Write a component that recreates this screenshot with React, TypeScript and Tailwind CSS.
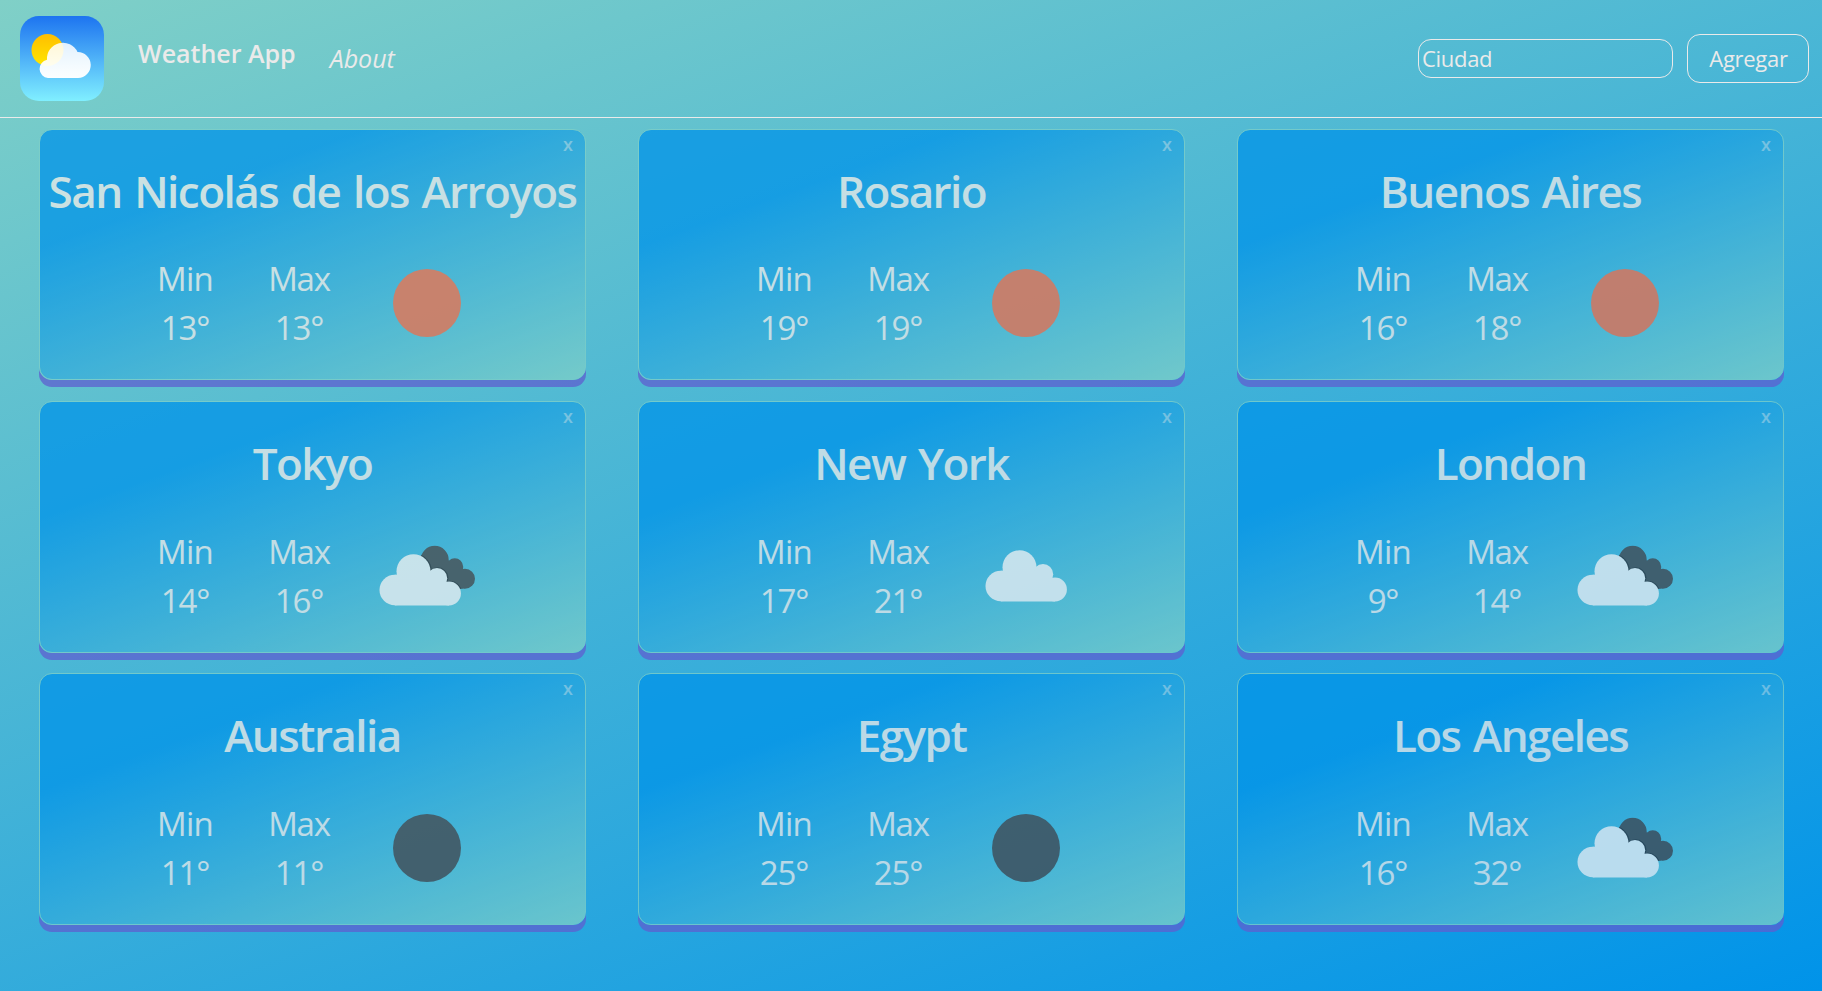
import React from "react";

type Sky = "sun" | "moon" | "cloud" | "broken";

interface City {
  name: string;
  min: number;
  max: number;
  sky: Sky;
}

const cities: City[] = [
  { name: "San Nicolás de los Arroyos", min: 13, max: 13, sky: "sun" },
  { name: "Rosario", min: 19, max: 19, sky: "sun" },
  { name: "Buenos Aires", min: 16, max: 18, sky: "sun" },
  { name: "Tokyo", min: 14, max: 16, sky: "broken" },
  { name: "New York", min: 17, max: 21, sky: "cloud" },
  { name: "London", min: 9, max: 14, sky: "broken" },
  { name: "Australia", min: 11, max: 11, sky: "moon" },
  { name: "Egypt", min: 25, max: 25, sky: "moon" },
  { name: "Los Angeles", min: 16, max: 32, sky: "broken" },
];

function CloudShape() {
  return (
    <>
      <circle cx="15.3" cy="35.7" r="15.3" />
      <circle cx="34" cy="17" r="17" />
      <circle cx="57.5" cy="24" r="10.2" />
      <circle cx="69.5" cy="39.2" r="11.9" />
      <path d="M15.3 20.4H34L57.5 20L69.5 30V51.1H15.3Z" />
    </>
  );
}

function SkyIcon({ sky }: { sky: Sky }) {
  return (
    <svg viewBox="0 0 100 100" className="h-[100px] w-[100px]" aria-hidden="true">
      {sky === "sun" && <circle cx="50" cy="50" r="34" fill="#ec6e4c" />}
      {sky === "moon" && <circle cx="50" cy="50" r="34" fill="#48484a" />}
      {sky === "cloud" && (
        <g transform="translate(9.5 24.3)" fill="#f2f2f2">
          <CloudShape />
        </g>
      )}
      {sky === "broken" && (
        <g transform="translate(0 0.3)">
          <clipPath id="rear-cloud">
            <circle cx="57.7" cy="33.5" r="14" />
            <circle cx="77.7" cy="40.5" r="8.5" />
            <circle cx="88" cy="52.5" r="10" />
            <path d="M50 40L72 34L86 46V62.5H60Z" />
          </clipPath>
          <g clipPath="url(#rear-cloud)">
            <rect width="100" height="100" fill="#48484a" />
            <g transform="translate(3.3 27.6)" fill="#2c2c30" stroke="#2c2c30" strokeWidth="0.8">
              <CloudShape />
            </g>
          </g>
          <g transform="translate(2.5 28)" fill="#f2f2f2">
            <CloudShape />
          </g>
        </g>
      )}
    </svg>
  );
}

function CityCard({ city }: { city: City }) {
  return (
    <article className="flex h-[251.4px] w-[547px] flex-col rounded-[13px] border border-[#80d0c7] bg-[linear-gradient(160deg,#0093e9_26%,#80d0c7_100%)] opacity-75 shadow-[0_7px_0_#5f5fd0]">
      <div className="flex h-[31.5px] items-start justify-end pr-[12px]">
        <button className="text-[18px] leading-[28px] font-semibold text-[#eaeaea] opacity-50">x</button>
      </div>
      <h2 className="text-center text-[44px] leading-[58px] font-semibold tracking-[-1.55px] whitespace-nowrap text-[#eaeaea] [word-spacing:2.8px]">
        {city.name}
      </h2>
      <div className="mt-[33.9px] flex pl-[90px] text-center text-[33px] leading-[49px] tracking-[-1.2px] text-[#eaeaea]">
        <div className="w-[110px] pt-px">
          <p className="tracking-[-0.8px]">Min</p>
          <p>{city.min}°</p>
        </div>
        <div className="w-[118px] pt-px">
          <p>Max</p>
          <p>{city.max}°</p>
        </div>
        <div className="ml-[19px]">
          <SkyIcon sky={city.sky} />
        </div>
      </div>
    </article>
  );
}

function Logo() {
  return (
    <svg viewBox="0 0 84 85" className="h-[85px] w-[84px]" aria-hidden="true">
      <defs>
        <linearGradient id="sky" x1="0" y1="0" x2="0" y2="1">
          <stop offset="0" stopColor="#1d74f0" />
          <stop offset="1" stopColor="#80efff" />
        </linearGradient>
        <linearGradient id="sun" x1="0" y1="0" x2="0" y2="1">
          <stop offset="0" stopColor="#ffbe00" />
          <stop offset="1" stopColor="#ffe600" />
        </linearGradient>
        <linearGradient id="cloud" x1="0" y1="0" x2="0" y2="1">
          <stop offset="0" stopColor="#fff" stopOpacity="0.85" />
          <stop offset="1" stopColor="#fff" stopOpacity="0.98" />
        </linearGradient>
      </defs>
      <rect width="84" height="85" rx="19" fill="url(#sky)" />
      <circle cx="27.5" cy="34" r="16" fill="url(#sun)" />
      <path
        d="M28 62A9.2 9.2 0 0 1 27 43.8A16 16 0 0 1 57.5 36A13 13 0 0 1 58 62Z"
        fill="url(#cloud)"
      />
    </svg>
  );
}

export default function App() {
  return (
    <div className="flex min-h-screen flex-col bg-[linear-gradient(160deg,#80d0c7_0%,#0093e9_100%)] font-['Open_Sans','Noto_Sans',sans-serif] text-[#eaeaea]">
      <header className="flex h-[118px] items-center border-b border-[#eaeaea] pr-[13px] pl-5">
        <Logo />
        <h1 className="ml-[34px] pb-[12px] text-[25px] leading-8 font-semibold">Weather App</h1>
        <a className="ml-[34px] pb-[2px] text-[25px] leading-8 italic">About</a>
        <form className="ml-auto flex items-center">
          <input
            placeholder="Ciudad"
            className="h-[39px] w-[255px] rounded-[13px] border border-[#eaeaea] bg-transparent px-[3px] pb-px text-[22px] tracking-[-0.3px] placeholder:text-[#eaeaea]"
          />
          <button
            type="button"
            className="ml-[14px] h-[49px] w-[122px] rounded-[13px] border border-[#eaeaea] pl-px text-[22px] tracking-[-0.3px]"
          >
            Agregar
          </button>
        </form>
      </header>
      <main className="grid grid-cols-3 gap-x-[52px] gap-y-[20.8px] pt-[11px] pr-[38px] pl-[39px]">
        {cities.map((city) => (
          <CityCard key={city.name} city={city} />
        ))}
      </main>
    </div>
  );
}
